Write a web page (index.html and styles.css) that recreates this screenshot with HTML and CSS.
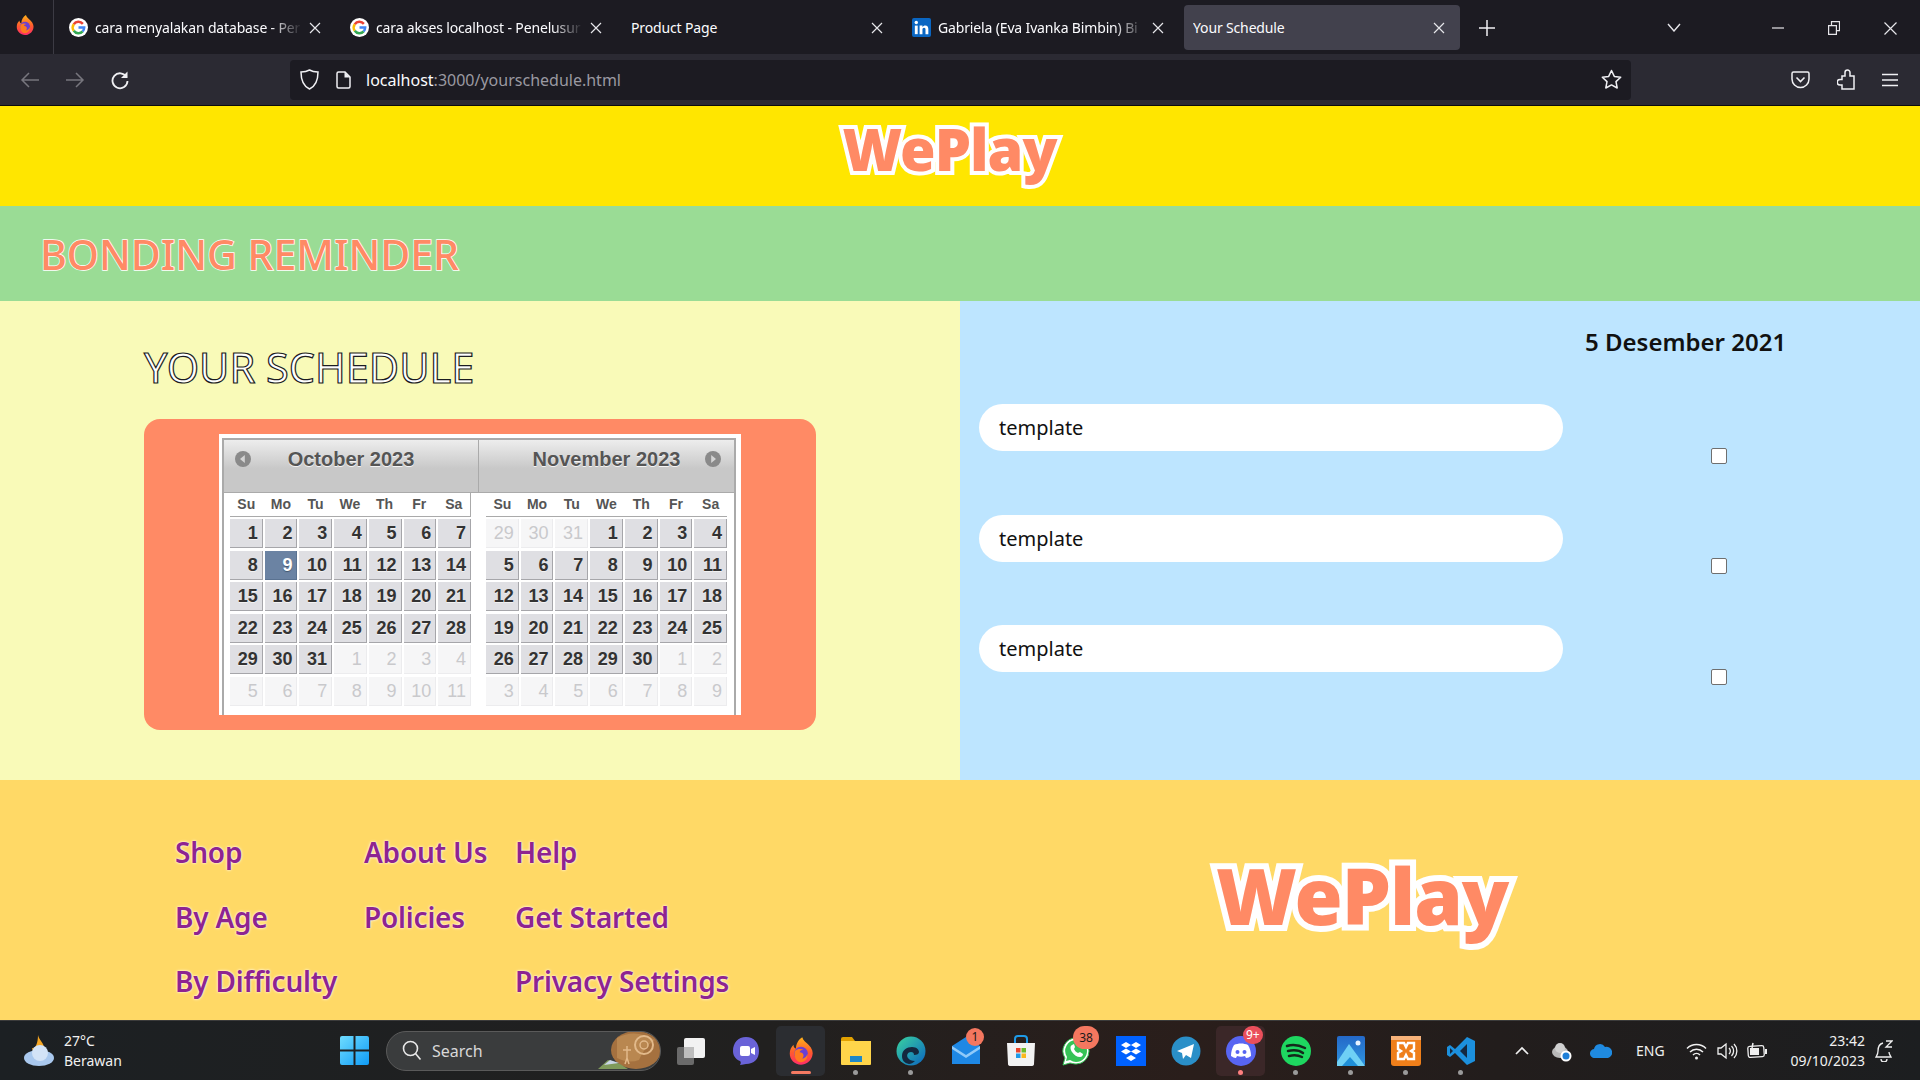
FILE: index.html
```html
<!DOCTYPE html>
<html lang="en">
<head>
  <meta charset="UTF-8" />
  <title>Your Schedule</title>
  <link rel="stylesheet" href="styles.css">
</head>
<body>

  <!-- Browser tabs -->
  <div class="tabbar">
    <div class="ff-btn">
      <svg width="22" height="24" viewBox="0 0 24 24"><defs><linearGradient id="ffa" x1="0" y1="0" x2="0" y2="1"><stop offset="0" stop-color="#ffb31a"/><stop offset=".55" stop-color="#ff5a2e"/><stop offset="1" stop-color="#ff2d6a"/></linearGradient></defs><path d="M13 1c1 3 3 4 5 6 3 3 4 6 3 9-1 4-5 7-9 7-5 0-9-4-9-9 0-3 1-5 3-7 0 2 1 3 2 3 0-4 2-7 5-9z" fill="url(#ffa)"/><circle cx="12" cy="14" r="5.5" fill="#6b3fd4"/><path d="M7 12c2-2 5-2 7-1-2 0-3 1-3 2 3 0 4 3 2 5 2 0 4-2 4-4 1 4-2 7-5 7-4 0-6-5-5-9z" fill="#ff7a1f"/></svg>
    </div>
    <div class="tab">
      <svg class="fav" width="19" height="19" viewBox="0 0 20 20"><circle cx="10" cy="10" r="10" fill="#fff"/><path d="M14.6 6.2A6 6 0 0 0 5 6.6" fill="none" stroke="#ea4335" stroke-width="2.6"/><path d="M5 6.6a6 6 0 0 0 0 6.8" fill="none" stroke="#fbbc05" stroke-width="2.6"/><path d="M5 13.4a6 6 0 0 0 9.4.6" fill="none" stroke="#34a853" stroke-width="2.6"/><path d="M10 10h6c0 2-.6 3-1.6 4" fill="none" stroke="#4285f4" stroke-width="2.6"/></svg>
      <span class="tab-title">cara menyalakan database - Per</span>
      <svg class="tab-x" width="12" height="12" viewBox="0 0 12 12"><path d="M1 1l10 10M11 1L1 11" stroke="#e6e6ea" stroke-width="1.2"/></svg>
    </div>
    <div class="tab">
      <svg class="fav" width="19" height="19" viewBox="0 0 20 20"><circle cx="10" cy="10" r="10" fill="#fff"/><path d="M14.6 6.2A6 6 0 0 0 5 6.6" fill="none" stroke="#ea4335" stroke-width="2.6"/><path d="M5 6.6a6 6 0 0 0 0 6.8" fill="none" stroke="#fbbc05" stroke-width="2.6"/><path d="M5 13.4a6 6 0 0 0 9.4.6" fill="none" stroke="#34a853" stroke-width="2.6"/><path d="M10 10h6c0 2-.6 3-1.6 4" fill="none" stroke="#4285f4" stroke-width="2.6"/></svg>
      <span class="tab-title">cara akses localhost - Penelusur</span>
      <svg class="tab-x" width="12" height="12" viewBox="0 0 12 12"><path d="M1 1l10 10M11 1L1 11" stroke="#e6e6ea" stroke-width="1.2"/></svg>
    </div>
    <div class="tab tab-plain">
      <span class="tab-title">Product Page</span>
      <svg class="tab-x" width="12" height="12" viewBox="0 0 12 12"><path d="M1 1l10 10M11 1L1 11" stroke="#e6e6ea" stroke-width="1.2"/></svg>
    </div>
    <div class="tab">
      <svg class="fav" width="19" height="19" viewBox="0 0 20 20"><rect width="20" height="20" rx="2" fill="#0a66c2"/><rect x="3" y="8" width="3" height="9" fill="#fff"/><circle cx="4.5" cy="4.7" r="1.8" fill="#fff"/><path d="M8 8h3v1.4c.7-1 1.7-1.6 3-1.6 2.3 0 3.2 1.500 3.200 3.900V17h-3v-4.800c0-1.200-.4-2-1.500-2-1.200 0-1.700.9-1.700 2.100V17H8z" fill="#fff"/></svg>
      <span class="tab-title">Gabriela (Eva Ivanka Bimbin) Bi</span>
      <svg class="tab-x" width="12" height="12" viewBox="0 0 12 12"><path d="M1 1l10 10M11 1L1 11" stroke="#e6e6ea" stroke-width="1.2"/></svg>
    </div>
    <div class="tab tab-plain tab-active">
      <span class="tab-title">Your Schedule</span>
      <svg class="tab-x" width="12" height="12" viewBox="0 0 12 12"><path d="M1 1l10 10M11 1L1 11" stroke="#e6e6ea" stroke-width="1.2"/></svg>
    </div>
    <svg class="tab-new" width="16" height="16" viewBox="0 0 16 16"><path d="M8 0v16M0 8h16" stroke="#f0f0f4" stroke-width="1.5"/></svg>
    <svg class="tab-list" width="14" height="9" viewBox="0 0 14 9"><path d="M1 1l6 7 6-7" fill="none" stroke="#e6e6ea" stroke-width="1.4"/></svg>
    <div class="win-btns">
      <svg width="12" height="12" viewBox="0 0 12 12"><path d="M0 6h12" stroke="#e6e6ea" stroke-width="1.2"/></svg>
      <svg width="12" height="14" viewBox="0 0 12 14"><path d="M.6 4.600h7.800v8.800H.6zM3.500 4.500V.6h8v9h-3" fill="none" stroke="#e6e6ea" stroke-width="1.200"/></svg>
      <svg width="13" height="13" viewBox="0 0 13 13"><path d="M.5.500l12 12M12.500.500l-12 12" stroke="#e6e6ea" stroke-width="1.200"/></svg>
    </div>
  </div>

  <!-- Address bar -->
  <div class="toolbar">
    <div class="nav-btns">
      <svg width="20" height="16" viewBox="0 0 20 16"><path d="M9 1L2 8l7 7M2 8h17" fill="none" stroke="#77767e" stroke-width="1.500"/></svg>
      <svg width="20" height="16" viewBox="0 0 20 16"><path d="M11 1l7 7-7 7M18 8H1" fill="none" stroke="#77767e" stroke-width="1.500"/></svg>
      <svg width="20" height="20" viewBox="0 0 20 20"><path d="M16.500 7A7.500 7.500 0 1 0 17.500 11" fill="none" stroke="#f0f0f4" stroke-width="1.800"/><path d="M17.500 1.500V8H11z" fill="#f0f0f4"/></svg>
    </div>
    <div class="urlbar">
      <svg width="19" height="21" viewBox="0 0 19 21"><path d="M9.500 1C12 2.500 15 3 18 3c0 8-2 14-8.500 17C3 17 1 11 1 3c3 0 6-.5 8.500-2z" fill="none" stroke="#f0f0f4" stroke-width="1.500"/></svg>
      <svg class="url-page" width="15" height="18" viewBox="0 0 15 18"><path d="M1 2.500Q1 1 2.500 1H9l5 5v9.500q0 1.500-1.500 1.500h-10Q1 17 1 15.500z" fill="none" stroke="#f0f0f4" stroke-width="1.500"/><path d="M8.500 1v5.500H14" fill="#f0f0f4"/></svg>
      <span class="url-text">localhost<span class="url-dim">:3000/yourschedule.html</span></span>
      <svg class="url-star" width="21" height="21" viewBox="0 0 21 21"><path d="M10.500 1.500l2.800 5.900 6.400.8-4.700 4.400 1.200 6.400-5.700-3.100-5.700 3.100 1.200-6.400L1.300 8.200l6.400-.8z" fill="none" stroke="#f0f0f4" stroke-width="1.500" stroke-linejoin="round"/></svg>
    </div>
    <div class="tool-btns">
      <svg width="19" height="18" viewBox="0 0 19 18"><path d="M2.500 1h14Q18 1 18 2.500V8a8.500 8.500 0 0 1-17 0V2.500Q1 1 2.500 1z" fill="none" stroke="#f0f0f4" stroke-width="1.500"/><path d="M5.500 6.500l4 4 4-4" fill="none" stroke="#f0f0f4" stroke-width="1.600"/></svg>
      <svg width="18" height="21" viewBox="0 0 18 21"><path d="M8 3.500a2.500 2.500 0 0 1 5 0V7h4v13H5v-4H3a2.800 2.800 0 0 1 0-5.600h2V7h3z" fill="none" stroke="#f0f0f4" stroke-width="1.500"/></svg>
      <svg width="16" height="14" viewBox="0 0 16 14"><path d="M0 1.500h16M0 7h16M0 12.500h16" stroke="#f0f0f4" stroke-width="1.500"/></svg>
    </div>
  </div>

  <!-- Page -->
  <header class="site-head">
    <div class="logo logo-small">WePlay</div>
  </header>

  <section class="title-band">
    <h1>BONDING REMINDER</h1>
  </section>

  <main class="schedule">
    <section class="left-col">
      <h2>YOUR SCHEDULE</h2>
      <div class="cal-card">
        <div class="cal">
          <div class="cal-inner">
            <div class="cal-head">
              <div class="cal-half">
                <span class="arrow"><svg width="16" height="16" viewBox="0 0 16 16"><circle cx="8" cy="8" r="8" fill="#8a8a8a"/><path d="M9.800 4v8L5 8z" fill="#d4d4d4"/></svg></span>
                <span class="month">October 2023</span>
                <span></span>
              </div>
              <div class="cal-half">
                <span></span>
                <span class="month">November 2023</span>
                <span class="arrow"><svg width="16" height="16" viewBox="0 0 16 16"><circle cx="8" cy="8" r="8" fill="#8a8a8a"/><path d="M6.200 4v8L11 8z" fill="#d4d4d4"/></svg></span>
              </div>
            </div>
            <div class="cal-body">
              <div class="cal-month first">
                <div class="dow"><span>Su</span><span>Mo</span><span>Tu</span><span>We</span><span>Th</span><span>Fr</span><span>Sa</span></div>
                <div class="days">
                  <a>1</a><a>2</a><a>3</a><a>4</a><a>5</a><a>6</a><a>7</a>
                  <a>8</a><a class="today">9</a><a>10</a><a>11</a><a>12</a><a>13</a><a>14</a>
                  <a>15</a><a>16</a><a>17</a><a>18</a><a>19</a><a>20</a><a>21</a>
                  <a>22</a><a>23</a><a>24</a><a>25</a><a>26</a><a>27</a><a>28</a>
                  <a>29</a><a>30</a><a>31</a><a class="off">1</a><a class="off">2</a><a class="off">3</a><a class="off">4</a>
                  <a class="off">5</a><a class="off">6</a><a class="off">7</a><a class="off">8</a><a class="off">9</a><a class="off">10</a><a class="off">11</a>
                </div>
              </div>
              <div class="cal-month">
                <div class="dow"><span>Su</span><span>Mo</span><span>Tu</span><span>We</span><span>Th</span><span>Fr</span><span>Sa</span></div>
                <div class="days">
                  <a class="off">29</a><a class="off">30</a><a class="off">31</a><a>1</a><a>2</a><a>3</a><a>4</a>
                  <a>5</a><a>6</a><a>7</a><a>8</a><a>9</a><a>10</a><a>11</a>
                  <a>12</a><a>13</a><a>14</a><a>15</a><a>16</a><a>17</a><a>18</a>
                  <a>19</a><a>20</a><a>21</a><a>22</a><a>23</a><a>24</a><a>25</a>
                  <a>26</a><a>27</a><a>28</a><a>29</a><a>30</a><a class="off">1</a><a class="off">2</a>
                  <a class="off">3</a><a class="off">4</a><a class="off">5</a><a class="off">6</a><a class="off">7</a><a class="off">8</a><a class="off">9</a>
                </div>
              </div>
            </div>
          </div>
        </div>
      </div>
    </section>

    <section class="right-col">
      <h3>5 Desember 2021</h3>
      <div class="task"><div class="pill">template</div><span class="check"></span></div>
      <div class="task"><div class="pill">template</div><span class="check"></span></div>
      <div class="task"><div class="pill">template</div><span class="check"></span></div>
    </section>
  </main>

  <footer class="site-foot">
    <nav class="foot-links">
      <a>Shop</a><a>About Us</a><a>Help</a>
      <a>By Age</a><a>Policies</a><a>Get Started</a>
      <a>By Difficulty</a><span></span><a>Privacy Settings</a>
    </nav>
    <div class="logo logo-big">WePlay</div>
  </footer>

  <!-- Windows taskbar -->
  <div class="taskbar">
    <div class="weather">
      <svg width="34" height="32" viewBox="0 0 34 32"><path d="M15 0c1 5 6 8 6 13 0 3-2 5-5 5s-7-2-7-5c3 1 6-4 6-13z" fill="#f5a623"/><ellipse cx="16" cy="23" rx="15" ry="8" fill="#a9c8ee"/><circle cx="17" cy="18" r="8" fill="#d3e3f7"/></svg>
      <div class="weather-text"><span>27°C</span><span>Berawan</span></div>
    </div>
    <svg class="win-logo" width="29" height="29" viewBox="0 0 29 29"><defs><linearGradient id="wl" x1="0" y1="0" x2="1" y2="1"><stop offset="0" stop-color="#6fdcff"/><stop offset="1" stop-color="#0f9bf5"/></linearGradient></defs><path d="M0 2q0-2 2-2h11.500v13.500H0zM15.500 0H27q2 0 2 2v11.500H15.500zM0 15.500h13.500V29H2q-2 0-2-2zM15.500 15.500H29V27q0 2-2 2H15.500z" fill="url(#wl)"/></svg>
    <div class="search">
      <svg width="20" height="21" viewBox="0 0 20 21"><circle cx="8.500" cy="8.500" r="7" fill="none" stroke="#e8e8e8" stroke-width="1.600"/><path d="M13.500 13.500l5 6" stroke="#e8e8e8" stroke-width="1.600"/></svg>
      <span>Search</span>
      <svg class="search-art" width="64" height="38" viewBox="0 0 64 38"><ellipse cx="39" cy="18" rx="25" ry="19" fill="#a5713f"/><path d="M20 6q18-10 38 2-10 6-16 20-10 4-22-2z" fill="#b98750"/><circle cx="47" cy="13" r="9" fill="none" stroke="#e2b98a" stroke-width="2"/><circle cx="47" cy="13" r="4" fill="none" stroke="#e2b98a" stroke-width="1.500"/><path d="M30 14v12M26 18h8M28 32l2-6 2 6" stroke="#e2b98a" stroke-width="1.500" fill="none"/><path d="M1 37l10-9 12 4 8 5z" fill="#7f9a5b"/><path d="M7 33l6-5 9 3z" fill="#c9d6e6"/></svg>
    </div>
    <div class="apps">
      <div class="app"><svg width="30" height="30" viewBox="0 0 30 30"><rect x="1" y="11" width="17" height="18" rx="2" fill="#6a6a6a"/><rect x="8" y="2" width="21" height="20" rx="2" fill="#f2f2f2"/><rect x="8" y="11" width="10" height="11" fill="#bdbdbd"/></svg></div>
      <div class="app"><svg width="30" height="30" viewBox="0 0 30 30"><path d="M15 1c8 0 13 6 13 14s-5 13-13 13c-2 0-3 1-6 1 1-2 1-3 0-4C4 23 2 19 2 15 2 7 7 1 15 1z" fill="#6a63d8"/><rect x="9" y="10" width="10" height="10" rx="2" fill="#fff"/><path d="M20 13l4-2v8l-4-2z" fill="#fff"/></svg></div>
      <div class="app app-open app-ff">
        <svg width="30" height="32" viewBox="0 0 24 24"><path d="M13 1c1 3 3 4 5 6 3 3 4 6 3 9-1 4-5 7-9 7-5 0-9-4-9-9 0-3 1-5 3-7 0 2 1 3 2 3 0-4 2-7 5-9z" fill="url(#ffa)"/><circle cx="12" cy="14" r="5.500" fill="#6b3fd4"/><path d="M7 12c2-2 5-2 7-1-2 0-3 1-3 2 3 0 4 3 2 5 2 0 4-2 4-4 1 4-2 7-5 7-4 0-6-5-5-9z" fill="#ff7a1f"/></svg>
        <i class="bar"></i>
      </div>
      <div class="app"><svg width="30" height="30" viewBox="0 0 30 30"><path d="M0 3q0-2 2-2h9l3 4H0z" fill="#e2a100"/><path d="M0 5h30v23q0 1-1 1H1q-1 0-1-1z" fill="#ffd54a"/><rect x="9" y="20" width="12" height="6" fill="#1e88c8"/></svg><i class="dot"></i></div>
      <div class="app"><svg width="30" height="30" viewBox="0 0 30 30"><defs><linearGradient id="eg" x1="0" y1="0" x2="1" y2="1"><stop offset="0" stop-color="#3ad4a0"/><stop offset="1" stop-color="#0b64c0"/></linearGradient></defs><circle cx="15" cy="15" r="14.500" fill="url(#eg)"/><path d="M6 20c0-6 5-9 10-9 5 0 7 3 7 5 0 2-2 3-5 3 0-2-1-3-3-3-3 0-5 3-3 6 1 2 4 3 7 3-2 2-4 3-6 3-5-1-7-4-7-8z" fill="#14283f"/></svg><i class="dot"></i></div>
      <div class="app"><svg width="30" height="30" viewBox="0 0 30 30"><path d="M1 10l14-9 14 9v18H1z" fill="#1e88e5"/><path d="M1 10l14 9 14-9v3L15 22 1 13z" fill="#90caf9"/></svg><b class="badge badge-mail">1</b></div>
      <div class="app"><svg width="30" height="32" viewBox="0 0 30 32"><path d="M9 8V4q0-3 3-3h6q3 0 3 3v4" fill="none" stroke="#1e9be8" stroke-width="2"/><path d="M1 8h28l-1 21q0 2-3 2H5q-3 0-3-2z" fill="#f2f2f2"/><rect x="10" y="13" width="4.500" height="4.500" fill="#e8452c"/><rect x="15.500" y="13" width="4.500" height="4.500" fill="#6cbb2d"/><rect x="10" y="18.500" width="4.500" height="4.500" fill="#1e9be8"/><rect x="15.500" y="18.500" width="4.500" height="4.500" fill="#fbb81d"/></svg></div>
      <div class="app"><svg width="30" height="30" viewBox="0 0 30 30"><path d="M15 2a13 13 0 0 1 0 26c-2 0-5-1-6-1l-7 2 2-7a13 13 0 0 1 11-20z" fill="#fff" stroke="#36c356" stroke-width="1"/><path d="M15 4a11 11 0 0 1 0 22c-2 0-4-1-6-2l-4 1 1-4a11 11 0 0 1 9-17z" fill="#36c356"/><path d="M11 9c-2 1-2 4 0 7s5 5 8 5c2 0 3-2 3-3l-3-2-2 1c-2-1-3-2-4-4l1-2-1-3z" fill="#fff"/></svg><b class="badge badge-wa">38</b></div>
      <div class="app"><svg width="30" height="30" viewBox="0 0 30 30"><rect width="30" height="30" fill="#0061fe"/><path d="M10 6l5 3-5 3-5-3zM20 6l5 3-5 3-5-3zM10 12.500l5 3-5 3-5-3zM20 12.500l5 3-5 3-5-3zM15 19l5 3-5 3-5-3z" fill="#fff"/></svg></div>
      <div class="app"><svg width="30" height="30" viewBox="0 0 30 30"><circle cx="15" cy="15" r="14.500" fill="#2a8fc8"/><path d="M23 8L6 15l5 2 1 6 3-4 5 3z" fill="#fff"/></svg></div>
      <div class="app app-open app-dc">
        <svg width="30" height="32" viewBox="0 0 30 30"><circle cx="15" cy="15" r="15" fill="#5865f2"/><path d="M8 9c4-2 10-2 14 0 2 3 3 7 3 11-2 1-3 2-5 2l-1-2c-3 1-5 1-8 0l-1 2c-2 0-3-1-5-2 0-4 1-8 3-11z" fill="#fff"/><circle cx="11.500" cy="16" r="2" fill="#5865f2"/><circle cx="18.500" cy="16" r="2" fill="#5865f2"/></svg>
        <b class="badge badge-dc">9+</b>
        <i class="dot dot-pink"></i>
      </div>
      <div class="app"><svg width="30" height="30" viewBox="0 0 30 30"><circle cx="15" cy="15" r="15" fill="#1ed760"/><path d="M6 10c6-2 12-1 18 2M7 15c5-1 11-1 15 2M8 20c4-1 9-1 13 1" fill="none" stroke="#14281b" stroke-width="2.500" stroke-linecap="round"/></svg><i class="dot"></i></div>
      <div class="app"><svg width="28" height="30" viewBox="0 0 28 30"><defs><linearGradient id="ph" x1="0" y1="0" x2="0" y2="1"><stop offset="0" stop-color="#2469c8"/><stop offset="1" stop-color="#2f95e0"/></linearGradient></defs><rect width="28" height="30" rx="2" fill="url(#ph)"/><circle cx="21" cy="7" r="2.500" fill="#e8f2ff"/><path d="M0 26l12-18 16 22H0z" fill="#6fd0f5"/><path d="M5 30l8-9 8 9z" fill="#1f8fd8"/></svg><i class="dot"></i></div>
      <div class="app"><svg width="30" height="30" viewBox="0 0 30 30"><rect width="30" height="30" rx="3" fill="#ef7f1a"/><rect y="0" width="30" height="4" fill="#f7b27a"/><path d="M7 7h6l2 4 2-4h6v6l-3 2 3 2v6h-6l-2-4-2 4H7v-6l3-2-3-2z" fill="none" stroke="#fff" stroke-width="2.400"/></svg><i class="dot"></i></div>
      <div class="app"><svg width="30" height="30" viewBox="0 0 30 30"><path d="M21 1l8 4v20l-8 4L9 17l-5 4-3-2V11l3-2 5 4z" fill="#1c90dd"/><path d="M21 8l-7 7 7 7z" fill="#14283f"/><path d="M4 12l3 3-3 3z" fill="#14283f"/></svg><i class="dot"></i></div>
    </div>
    <div class="tray">
      <svg class="tray-chev" width="14" height="9" viewBox="0 0 14 9"><path d="M1 8l6-6 6 6" fill="none" stroke="#f0f0f0" stroke-width="1.700"/></svg>
      <svg class="tray-sync" width="22" height="22" viewBox="0 0 22 22"><ellipse cx="9" cy="12" rx="8" ry="6" fill="#b8b8b8"/><circle cx="9" cy="8" r="5" fill="#d0d0d0"/><circle cx="15" cy="16" r="5.500" fill="#fff"/><circle cx="15" cy="16" r="3.500" fill="#1e7fd8"/></svg>
      <svg class="tray-cloud" width="22" height="15" viewBox="0 0 22 15"><path d="M5 15a4.500 4.500 0 0 1-1-9 6 6 0 0 1 11-2 5 5 0 0 1 3 11z" fill="#1f8ae0"/></svg>
      <span class="tray-lang">ENG</span>
      <svg class="tray-wifi" width="21" height="18" viewBox="0 0 21 18"><path d="M1 6.500a13.500 13.500 0 0 1 19 0M4 10a9 9 0 0 1 13 0M7 13a5 5 0 0 1 7 0" fill="none" stroke="#f0f0f0" stroke-width="1.500"/><circle cx="10.500" cy="16" r="1.500" fill="#f0f0f0"/></svg>
      <svg class="tray-vol" width="21" height="18" viewBox="0 0 21 18"><path d="M1 6h3l5-4v14l-5-4H1z" fill="none" stroke="#f0f0f0" stroke-width="1.300"/><path d="M12 6a4 4 0 0 1 0 6M14.500 4a7 7 0 0 1 0 10M17 2a10 10 0 0 1 0 14" fill="none" stroke="#f0f0f0" stroke-width="1.300"/></svg>
      <svg class="tray-batt" width="20" height="17" viewBox="0 0 20 17"><rect x="1" y="4" width="16" height="11" rx="2" fill="none" stroke="#f0f0f0" stroke-width="1.300" transform="rotate(-4 9 9)"/><rect x="3" y="6" width="9" height="7" fill="#f0f0f0"/><rect x="18" y="7" width="2" height="5" fill="#f0f0f0"/><path d="M6 1L5 6" stroke="#f0f0f0" stroke-width="1.500"/></svg>
      <div class="clock"><span>23:42</span><span>09/10/2023</span></div>
      <svg class="tray-bell" width="18" height="22" viewBox="0 0 18 22"><path d="M8 3C4 4 3 8 3 11c0 3-1 4-2 6h15c-1-2-2-3-2-5M6 19a3 3 0 0 0 6 0" fill="none" stroke="#f0f0f0" stroke-width="1.300"/><path d="M11 1h6l-6 6h6" fill="none" stroke="#f0f0f0" stroke-width="1.300"/></svg>
    </div>
  </div>

</body>
</html>
```

FILE: styles.css
```css
* {
  box-sizing: border-box;
}
body {
  margin: 0;
  width: 1920px;
  height: 1080px;
  overflow: hidden;
  font-family: "Noto Sans", "Open Sans", sans-serif;
  background-color: #1c1b22;
}
h1, h2, h3 {
  margin: 0;
}

/* tab strip */
.tabbar {
  height: 54px;
  display: flex;
  align-items: flex-start;
  background-color: #1c1b22;
  color: #fbfbfe;
  font-size: 14px;
}
.ff-btn {
  width: 54px;
  height: 54px;
  padding: 13px 0 0 14px;
  border-right: 1px solid #3c3b44;
  margin-right: 6px;
}
.tab {
  width: 276px;
  height: 45px;
  margin: 5px 5px 0 0;
  padding: 0 15px 0 9px;
  display: flex;
  align-items: center;
  border-radius: 4px;
}
.tab-active {
  background-color: #42414d;
  margin-right: 0;
}
.fav {
  flex: none;
  margin-right: 7px;
}
.tab-title {
  flex: 1;
  white-space: nowrap;
  overflow: hidden;
  letter-spacing: -0.15px;
  -webkit-mask-image: linear-gradient(90deg, #000 85%, transparent 100%);
  mask-image: linear-gradient(90deg, #000 85%, transparent 100%);
}
.tab-plain .tab-title {
  -webkit-mask-image: none;
  mask-image: none;
}
.tab-x {
  flex: none;
  margin-left: 7px;
}
.tab-new {
  margin: 20px 0 0 19px;
}
.tab-list {
  margin: 23px 0 0 172px;
}
.win-btns {
  margin: 21px 0 0 91px;
  display: flex;
  align-items: center;
  gap: 44px;
}

/* toolbar */
.toolbar {
  height: 52px;
  display: flex;
  align-items: center;
  background-color: #2b2a33;
  border-bottom: 1px solid #0c0c0d;
}
.nav-btns {
  width: 290px;
  padding-left: 20px;
  display: flex;
  align-items: center;
  gap: 25px;
}
.urlbar {
  width: 1341px;
  height: 40px;
  background-color: #1c1b22;
  border-radius: 4px;
  display: flex;
  align-items: center;
  padding: 0 9px 0 10px;
  color: #fbfbfe;
}
.url-page {
  margin-left: 17px;
}
.url-text {
  margin-left: 15px;
  font-size: 16px;
  flex: 1;
}
.url-dim {
  color: #9a99a1;
}
.tool-btns {
  margin-left: 160px;
  display: flex;
  align-items: center;
  gap: 27px;
}

/* yellow logo bar */
.site-head {
  height: 100px;
  background-color: #ffe600;
  display: flex;
  justify-content: center;
  padding-right: 21px;
}
.logo {
  font-family: "Noto Sans", "Open Sans", sans-serif;
  font-weight: 900;
  color: #ff8a65;
  -webkit-text-stroke-color: #fff;
  paint-order: stroke fill;
  letter-spacing: -1px;
}
.logo-small {
  font-size: 57.5px;
  line-height: 86px;
  -webkit-text-stroke-width: 8px;
}
.logo-big {
  margin-top: 7px;
  font-size: 78px;
  line-height: 120px;
  -webkit-text-stroke-width: 12px;
}

.title-band {
  height: 95px;
  background-color: #9adc95;
  padding: 1px 0 0 40px;
}
.title-band h1 {
  font-size: 41px;
  line-height: 94px;
  font-weight: 500;
  color: #ff8a65;
  -webkit-text-stroke: 1.5px #fff;
  paint-order: stroke fill;
}

/* schedule */
.schedule {
  height: 479px;
  display: flex;
}
.left-col {
  width: 960px;
  background-color: #f9fab8;
  padding: 36px 0 0 144px;
}
.left-col h2 {
  height: 60px;
  margin-bottom: 22px;
  font-size: 41.5px;
  line-height: 60px;
  font-weight: 400;
  color: #fff;
  -webkit-text-stroke: 1.2px #1c1c22;
}
.cal-card {
  width: 672px;
  height: 311px;
  padding: 15px 75px;
  background-color: #ff8a65;
  border-radius: 16px;
}
.cal {
  height: 281px;
  background-color: #fff;
  padding: 4px 5px 0 3px;
  font-family: "Liberation Sans", Arial, sans-serif;
}
.cal-inner {
  height: 277px;
  border: 2px solid #aaa;
  border-bottom: none;
}
.cal-head {
  display: flex;
  height: 53px;
  border-bottom: 1px solid #aaa;
  background: linear-gradient(#ededed, #c8c8c8 55%);
}
.cal-half {
  width: 255px;
  display: grid;
  grid-template-columns: 38px 1fr 38px;
  padding-top: 6px;
  color: #555;
  text-shadow: 0 1px 0 #f4f4f4;
}
.cal-half:first-child {
  border-right: 1px solid #aaa;
}
.cal-half:last-child .arrow {
  padding-right: 4px;
}
.arrow {
  display: flex;
  justify-content: center;
  padding-top: 5px;
}
.month {
  font-size: 20px;
  line-height: 26px;
  font-weight: bold;
  text-align: center;
}
.cal-body {
  display: flex;
  gap: 15px;
  padding-left: 6px;
}
.cal-month {
  width: 241px;
}
.dow {
  height: 24px;
  display: grid;
  grid-template-columns: repeat(7, 1fr);
  column-gap: 2px;
  border-bottom: 1px solid #aaa;
  font-size: 14px;
  line-height: 22px;
  font-weight: bold;
  color: #555;
  text-align: center;
}
.cal-month.first .dow {
  border-right: 1px solid #aaa;
}
.days {
  display: grid;
  grid-template-columns: repeat(7, 1fr);
  grid-auto-rows: 29px;
  gap: 2.6px 2px;
  margin-top: 2px;
}
.days a {
  background-color: #dfdfe3;
  border-bottom: 1px solid #a6a6aa;
  border-right: 1px solid #a6a6aa;
  color: #333;
  font-size: 18px;
  line-height: 28px;
  font-weight: bold;
  text-align: right;
  padding-right: 4px;
  text-shadow: 0 1px 0 #f2f2f2;
}
.days a.off {
  background-color: #f6f6f7;
  border-color: #ececee;
  color: #c9c9cc;
  font-weight: normal;
  text-shadow: none;
}
.days a.today {
  background-color: #6b83a3;
  border-color: #5a7291;
  color: #fff;
  text-shadow: 0 1px 1px #44566e;
}

.right-col {
  width: 960px;
  background-color: #bde5ff;
  padding: 24px 0 0 19px;
}
.right-col h3 {
  height: 34px;
  margin-bottom: 45px;
  padding-left: 606px;
  font-size: 24px;
  line-height: 34px;
  font-weight: 600;
  white-space: nowrap;
  color: #111;
}
.task {
  display: flex;
  height: 47px;
  margin-bottom: 63.5px;
}
.pill {
  width: 584px;
  height: 47px;
  padding-left: 20px;
  background-color: #fff;
  border-radius: 24px;
  font-size: 20px;
  line-height: 47px;
  color: #111;
}
.check {
  width: 16px;
  height: 16px;
  margin: 43.5px 0 0 148px;
  background-color: #fff;
  border: 1.5px solid #6f6f6f;
  border-radius: 2px;
}

/* footer */
.site-foot {
  height: 240px;
  background-color: #ffd966;
  display: flex;
  padding: 48px 0 0 175px;
}
.foot-links {
  width: 1041px;
  display: grid;
  grid-template-columns: 189px 151px 1fr;
  grid-auto-rows: 64.500px;
  align-content: start;
}
.foot-links a {
  font-size: 28px;
  line-height: 48px;
  letter-spacing: -0.2px;
  font-weight: 600;
  color: #8e2490;
  text-shadow: 0 0 3px #fff, 0 0 1px #fff;
}

/* taskbar */
.taskbar {
  height: 60px;
  display: flex;
  align-items: center;
  color: #f0f0f0;
  border-top: 1px solid #3b3b3b;
  background: linear-gradient(90deg, #1c2023, #21201f 40%, #2a1e1b 62%, #221d1c 78%, #1c1e20);
}
.weather {
  width: 340px;
  display: flex;
  align-items: center;
  padding-left: 23px;
  gap: 7px;
}
.weather-text {
  display: flex;
  flex-direction: column;
  font-size: 14px;
  line-height: 20px;
}
.win-logo {
  flex: none;
}
.search {
  width: 275px;
  height: 40px;
  margin-left: 17px;
  display: flex;
  align-items: center;
  padding-left: 15px;
  gap: 10px;
  background-color: #3a3c3d;
  border: 1px solid #5a5a5a;
  border-radius: 20px;
  font-size: 16px;
  color: #d8d8d8;
  overflow: hidden;
}
.search-art {
  margin-left: auto;
  margin-right: -1px;
}
.apps {
  margin-left: 2px;
  display: flex;
  width: 825px;
}
.app {
  position: relative;
  width: 55px;
  height: 50px;
  display: flex;
  align-items: center;
  justify-content: center;
}
.app-open {
  width: 49px;
  margin: 0 3px;
  border-radius: 5px;
  background-color: #2b2d31;
}
.app-dc {
  background-color: #3b2728;
}
.dot {
  position: absolute;
  left: 50%;
  bottom: 1px;
  width: 5px;
  height: 5px;
  margin-left: -2.500px;
  border-radius: 50%;
  background-color: #9a9a9a;
}
.dot-pink {
  background-color: #ff7f7f;
}
.bar {
  position: absolute;
  left: 50%;
  bottom: 2px;
  width: 20px;
  height: 3px;
  margin-left: -10px;
  border-radius: 2px;
  background-color: #f47a62;
}
.badge {
  position: absolute;
  top: 2px;
  left: 31px;
  min-width: 18px;
  height: 18px;
  padding: 0 3px;
  border-radius: 9px;
  background-color: #f4775f;
  color: #1a1a1a;
  font-size: 12px;
  line-height: 18px;
  font-weight: 400;
  text-align: center;
}
.badge-mail {
  left: 28px;
}
.badge-wa {
  min-width: 26px;
  left: 25px;
  height: 23px;
  border-radius: 12px;
  line-height: 23px;
  top: 0;
}
.badge-dc {
  left: 27px;
  top: 0;
  background-color: #ea4f5b;
  color: #fff;
}
.tray {
  flex: 1;
  display: flex;
  align-items: center;
}
.tray-chev {
  margin-left: 27px;
}
.tray-sync {
  margin-left: 22px;
}
.tray-cloud {
  margin-left: 17px;
}
.tray-lang {
  margin-left: 24px;
  width: 33px;
  font-size: 14px;
}
.tray-wifi {
  margin-left: 17px;
}
.tray-vol {
  margin-left: 10px;
}
.tray-batt {
  margin-left: 9px;
}
.clock {
  width: 98px;
  display: flex;
  flex-direction: column;
  align-items: flex-end;
  font-size: 14px;
  line-height: 20px;
}
.tray-bell {
  margin-left: 10px;
}
```
